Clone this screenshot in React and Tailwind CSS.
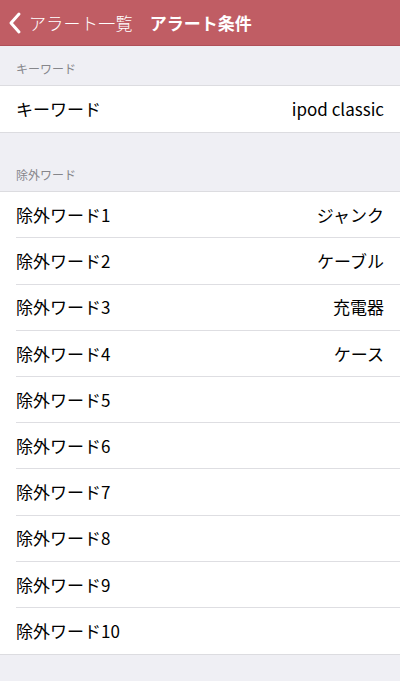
import { FaChevronLeft } from "react-icons/fa";

const jp = { fontFamily: '"Noto Sans CJK JP", "Noto Sans", sans-serif' };

const excludes = ["ジャンク", "ケーブル", "充電器", "ケース", "", "", "", "", "", ""];

const Row = ({ label, value, last }) => (
  <div className="h-[46.2px] flex items-center bg-white pl-4">
    <div
      className={`h-full flex-1 flex items-center justify-between pr-4 ${
        last ? "" : "border-b border-[#dedee2]"
      }`}>
      <span className="text-[17px] text-black">{label}</span>
      <span className="text-[17px] text-black">{value}</span>
    </div>
  </div>
);

export default function App() {
  return (
    <div className="w-[400px] h-[681px] bg-[#efeff4] overflow-hidden" style={jp}>
      {/* ナビゲーションバー */}
      <header className="h-[46px] bg-[#c05d64] border-b border-[#b05058] flex items-center text-white">
        <div className="flex items-center pl-[8px]">
          <svg width="14" height="24" viewBox="0 0 14 24" className="mr-[7px]">
            <path d="M11 3 L3 12 L11 21" fill="none" stroke="white" strokeWidth="3" strokeLinecap="round" strokeLinejoin="round" />
          </svg>
          <span className="text-[17px] font-light tracking-[0.3px]">アラート一覧</span>
        </div>
        <span className="ml-[17px] text-[17px] font-bold">アラート条件</span>
      </header>

      {/* キーワード */}
      <div className="h-[39px] flex items-end pl-4 pb-[7px]">
        <span className="text-[12px] text-[#86868b]">キーワード</span>
      </div>
      <div className="border-y border-[#dcdce0]">
        <Row label="キーワード" value="ipod classic" last />
      </div>

      {/* 除外ワード */}
      <div className="h-[58px] flex items-end pl-4 pb-[7px]">
        <span className="text-[12px] text-[#86868b]">除外ワード</span>
      </div>
      <div className="border-y border-[#dcdce0]">
        {excludes.map((v, i) => (
          <Row key={i} label={`除外ワード${i + 1}`} value={v} last={i === excludes.length - 1} />
        ))}
      </div>
    </div>
  );
}
